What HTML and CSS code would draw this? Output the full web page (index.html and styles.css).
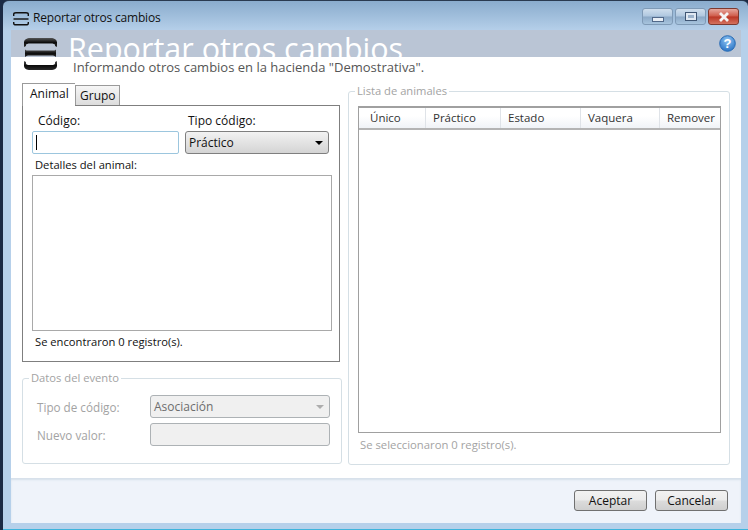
FILE: index.html
```html
<!DOCTYPE html>
<html lang="es">
<head>
<meta charset="utf-8">
<title>Reportar otros cambios</title>
<link rel="stylesheet" href="styles.css">
</head>
<body>
<div class="window">
  <div class="titlebar">
    <svg class="app-icon" width="16" height="14" viewBox="0 0 16 14"><path d="M0.700 4V2.300C0.700 1.300 1.800 0.800 3 0.800H13C14.200 0.800 15.300 1.300 15.300 2.300V4" fill="none" stroke="#111" stroke-width="1.400"/><path d="M0.500 7H15.500" stroke="#111" stroke-width="1.400"/><path d="M0.700 10V11.200C0.700 12.200 1.800 12.800 3 12.800H13C14.200 12.800 15.300 12.200 15.300 11.200V10" fill="none" stroke="#111" stroke-width="1.400"/></svg>
    <span class="title-text">Reportar otros cambios</span>
    <div class="controls">
      <div class="ctl"><span class="glyph-min"></span></div>
      <div class="ctl"><span class="glyph-max"></span></div>
      <div class="ctl close"><svg width="14" height="10" viewBox="0 0 14 10"><path d="M3 1L11 9M11 1L3 9" stroke="#f4f4f4" stroke-width="2.800"/></svg></div>
    </div>
  </div>
  <div class="client">
    <header class="head">
      <svg class="logo" width="33" height="33" viewBox="0 0 33 33">
        <defs><linearGradient id="g" x1="0" y1="0" x2="0" y2="1"><stop offset="0" stop-color="#555"/><stop offset=".5" stop-color="#0c0c0c"/><stop offset="1" stop-color="#2a2a2a"/></linearGradient></defs>
        <path d="M0 9V4.500C0 1.500 3 0 6 0H27C30 0 33 1.500 33 4.500V9L31 8V7C31 6 29 5.500 27 5.500H6C4 5.500 2 6 2 7V8Z" fill="url(#g)"/>
        <path d="M1 11.500C2 12.500 3 12.500 4 12.500H29C30 12.500 31 12.500 32 11.500V19C31 18 30 17.500 29 17.500H4C3 17.500 2 18 1 19Z" fill="url(#g)"/>
        <path d="M0 23L2 24V25.500C2 26.500 4 27 6 27H27C29 27 31 26.500 31 25.500V24L33 23V27.500C33 31 30 32 27 32H6C3 32 0 31 0 27.500Z" fill="url(#g)"/>
      </svg>
      <div class="head-text">
        <h1 class="big-title">Reportar otros cambios</h1>
        <p class="subtitle">Informando otros cambios en la hacienda "Demostrativa".</p>
      </div>
      <svg class="help" width="17" height="17" viewBox="0 0 17 17">
        <defs><radialGradient id="h" cx=".5" cy=".3" r=".8"><stop offset="0" stop-color="#8fc4f2"/><stop offset="1" stop-color="#1c69c0"/></radialGradient></defs>
        <circle cx="8.500" cy="8.500" r="7.800" fill="url(#h)" stroke="#2a6cb4"/>
        <text x="8.500" y="12.800" text-anchor="middle" class="help-q">?</text>
      </svg>
    </header>
    <main class="content">
      <div class="left">
        <div class="tabs">
          <span class="tab active">Animal</span>
          <span class="tab">Grupo</span>
        </div>
        <section class="panel">
          <div class="form-row">
            <div class="code-col">
              <label class="lbl lbl-code">Código:</label>
              <div class="code-input"><span class="caret"></span></div>
            </div>
            <div class="type-col">
              <label class="lbl lbl-type">Tipo código:</label>
              <div class="select"><span>Práctico</span><span class="arrow"></span></div>
            </div>
          </div>
          <label class="lbl lbl-det">Detalles del animal:</label>
          <div class="details"></div>
          <p class="count">Se encontraron 0 registro(s).</p>
        </section>
        <fieldset class="group event">
          <legend>Datos del evento</legend>
          <div class="event-row">
            <span class="dim-lbl">Tipo de código:</span>
            <div class="select disabled"><span>Asociación</span><span class="arrow"></span></div>
          </div>
          <div class="event-row">
            <span class="dim-lbl">Nuevo valor:</span>
            <div class="select disabled"></div>
          </div>
        </fieldset>
      </div>
      <fieldset class="group list">
        <legend>Lista de animales</legend>
        <div class="table">
          <div class="thead">
            <span class="th w1">Único</span>
            <span class="th w2">Práctico</span>
            <span class="th w3">Estado</span>
            <span class="th w4">Vaquera</span>
            <span class="th w5">Remover</span>
          </div>
        </div>
        <p class="sel-count">Se seleccionaron 0 registro(s).</p>
      </fieldset>
    </main>
    <footer class="foot">
      <button class="btn">Aceptar</button>
      <button class="btn">Cancelar</button>
    </footer>
  </div>
</div>
</body>
</html>
```
FILE: styles.css
```css
* { box-sizing: border-box; }
html, body { margin: 0; padding: 0; }
body { width: 748px; height: 530px; background: #1b2a44; overflow: hidden; font-family: "Open Sans", "Noto Sans", sans-serif; font-size: 12px; color: #111; }
.window { width: 745px; height: 530px; margin-left: 3px; display: flex; flex-direction: column; background: linear-gradient(#8aaccd 0, #b6d0ea 30px, #b6d0ea 100%); border-top: 1px solid #2a3a50; border-bottom: 1px solid #3fb4dc; border-radius: 6px 6px 0 0; padding: 0 7px 6px 8px; }
.titlebar { height: 29px; flex: none; display: flex; align-items: center; position: relative; margin-left: -8px; margin-right: -7px; padding: 0 9px 0 10px; }
.app-icon { margin-right: 4px; flex: none; margin-top: 7px; }
.title-text { font-size: 12px; letter-spacing: -.2px; margin-top: 3px; }
.controls { margin-left: auto; display: flex; gap: 2px; margin-top: 2px; }
.ctl { width: 31px; height: 17px; border: 1px solid #7f9ab6; border-radius: 3px; display: flex; align-items: center; justify-content: center; background: linear-gradient(#cfdeed 0, #afc7df 48%, #8ba8c6 52%, #a7c4de 100%); }
.close { background: linear-gradient(#e6a79d 0, #cf5a49 48%, #ba3524 52%, #d4725f 100%); border-color: #7d3a30; }
.glyph-min { width: 12px; height: 5px; margin-top: 5px; background: #e8eef5; border: 1px solid #52698a; }
.glyph-max { width: 12px; height: 9px; background: #dfe8f2; border: 1px solid #3f5674; box-shadow: inset 0 0 0 2px #dfe8f2, inset 0 0 0 9px #9cb3cc; }
.client { flex: 1; min-height: 0; display: flex; flex-direction: column; background: #fff; }
.head { height: 53px; flex: none; display: flex; align-items: flex-start; background: linear-gradient(#bac5d5 0 27px, #fff 27px); padding-left: 13px; position: relative; }
.logo { margin-top: 8px; flex: none; }
.head-text { margin-left: 11px; min-width: 0; }
.big-title { margin: 0; color: #fff; font-weight: 400; font-size: 30.500px; line-height: 36px; height: 29px; white-space: nowrap; font-family: "Open Sans", sans-serif; }
.subtitle { margin: 0 0 0 5px; color: #555; font-size: 13px; line-height: 17px; position: relative; white-space: nowrap; }
.help { position: absolute; right: 5px; top: 5px; }
.help-q { fill: #fff; font-family: "Liberation Sans", sans-serif; font-size: 13px; font-weight: 700; }
.content { flex: 1; min-height: 0; display: flex; gap: 6px; padding: 0 11px 0 11px; }
.left { width: 320px; flex: none; }
.tabs { display: flex; align-items: flex-end; height: 22px; }
.tab { height: 20px; width: 45px; padding-left: 4px; border: 1px solid #9a9a9a; border-bottom: 0; background: linear-gradient(#f6f6f6, #dcdcdc); line-height: 20px; margin-bottom: 0; }
.active { height: 23px; width: 53px; background: #fff; padding-left: 7px; margin-bottom: -1px; position: relative; border-right: 0; line-height: 20px; }
.panel { width: 318px; height: 257px; border: 1px solid #7f7f7f; background: #fff; padding: 0 7px 0 9px; }
.form-row { display: flex; gap: 6px; }
.code-col { width: 147px; }
.type-col { width: 144px; }
.lbl { display: block; line-height: 16px; }
.lbl-code { padding: 7px 0 2px 6px; height: 25px; }
.lbl-type { padding: 7px 0 2px 3px; height: 25px; }
.lbl-det { margin-left: 3px; margin-top: 3px; height: 18px; font-size: 11.200px; }
.code-input { height: 23px; border: 1px solid #9cc6de; border-radius: 2px; padding: 3px 3px; }
.caret { display: block; width: 1px; height: 15px; background: #000; }
.select { height: 23px; border: 1px solid #7f7f7f; border-radius: 3px; background: linear-gradient(#f2f2f2, #d4d4d4); display: flex; align-items: center; justify-content: space-between; padding: 0 4px 0 3px; }
.arrow { width: 0; height: 0; border-left: 4px solid transparent; border-right: 4px solid transparent; border-top: 4px solid #000; margin-right: 1px; }
.details { width: 300px; height: 156px; margin-left: 0; border: 1px solid #a9a9a9; }
.count { margin: 0 0 0 3px; line-height: 16px; padding-top: 3px; font-size: 11.200px; }
.group { margin: 0; border: 1px solid #d5dfe5; border-radius: 3px; padding: 0; min-width: 0; color: #a3a3a3; }
.group legend { padding: 0 2px; line-height: 16px; color: #a3a3a3; font-size: 11.200px; }
.event { width: 320px; height: 94px; margin-top: 8px; padding: 9px 11px 0 14px; }
.event legend { margin-left: -8px; }
.event-row { display: flex; align-items: center; height: 23px; margin-bottom: 5px; justify-content: space-between; }
.event .select { width: 180px; border-color: #adb2b5; background: #f0f0f0; color: #6d6d6d; }
.event .arrow { border-top-color: #adadad; }
.dim-lbl { color: #a3a3a3; font-size: 11.700px; }
.list { flex: 1; height: 382px; margin-top: 0; padding: 7px 8px 0 9px; }
.list legend { margin-left: -3px; }
.table { height: 327px; border: 1px solid #a0a0a0; border-top-width: 2px; }
.thead { display: flex; height: 22px; border-bottom: 2px solid #b4b4b4; background: linear-gradient(#fff 40%, #f0f3f7); }
.th { color: #333; padding-left: 11px; border-right: 1px solid #dfe3e8; line-height: 20px; white-space: nowrap; font-size: 11.500px; }
.w1 { width: 67px; }
.w2 { width: 75px; padding-left: 7px; }
.w3 { width: 80px; padding-left: 7px; }
.w4 { width: 79px; padding-left: 7px; }
.w5 { flex: 1; border-right: 0; padding-left: 7px; }
.sel-count { margin: 0 0 0 2px; padding-top: 4px; line-height: 16px; color: #a3a3a3; font-size: 11.300px; }
.foot { height: 45px; flex: none; margin-top: auto; background: #eff3fa; box-shadow: inset 0 2px 2px #d6e0ea; display: flex; justify-content: flex-end; gap: 8px; padding: 12px 13px 0 0; }
.btn { width: 73px; height: 21px; border: 1px solid #707070; border-radius: 3px; background: linear-gradient(#f2f2f2 0, #ebebeb 48%, #dcdcdc 52%, #cfcfcf 100%); font: inherit; color: #111; padding: 0; }
```
